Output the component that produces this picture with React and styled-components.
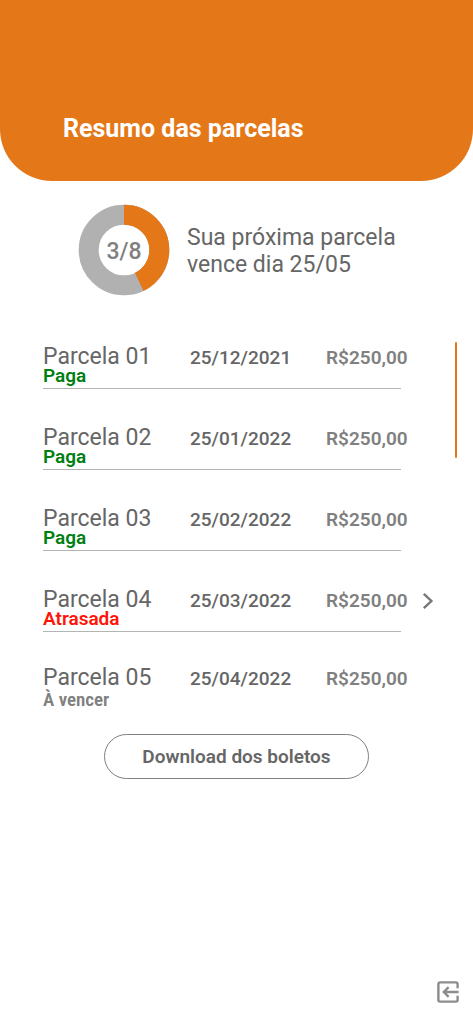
import React from 'react';
import styled, { createGlobalStyle } from 'styled-components';

const parcelas = [
    { numero: '01', data: '25/12/2021', valor: 'R$250,00', status: 'Paga' },
    { numero: '02', data: '25/01/2022', valor: 'R$250,00', status: 'Paga' },
    { numero: '03', data: '25/02/2022', valor: 'R$250,00', status: 'Paga' },
    { numero: '04', data: '25/03/2022', valor: 'R$250,00', status: 'Atrasada', detalhes: true },
    { numero: '05', data: '25/04/2022', valor: 'R$250,00', status: 'À vencer' },
];

const statusColors = {
    'Paga': '#007f12',
    'Atrasada': '#ff1408',
    'À vencer': '#808080',
};

export default function App() {
    return (
        <>
            <GlobalStyle />
            <Page>
                <PageHeader>
                    <h1>Resumo das parcelas</h1>
                </PageHeader>

                <Summary>
                    <Chart viewBox="0 0 92 92" role="img" aria-label="3 de 8 parcelas">
                        <circle cx="46" cy="46" r="35.3" fill="none" stroke="#b1b1b1" strokeWidth="20" />
                        <circle
                            cx="46"
                            cy="46"
                            r="35.3"
                            fill="none"
                            stroke="#e47818"
                            strokeWidth="20"
                            pathLength="100"
                            strokeDasharray="42.9 57.1"
                            transform="rotate(-90 46 46)"
                        />
                        <text x="46" y="55" textAnchor="middle">3/8</text>
                    </Chart>
                    <p>Sua próxima parcela<br />vence dia 25/05</p>
                </Summary>

                <Panel>
                    <List>
                        {parcelas.map((parcela) => (
                            <Row key={parcela.numero}>
                                <Info>
                                    <Name>Parcela {parcela.numero}</Name>
                                    <DueDate>{parcela.data}</DueDate>
                                    <Amount>{parcela.valor}</Amount>
                                    <Status $status={parcela.status}>{parcela.status}</Status>
                                </Info>
                                {parcela.detalhes && (
                                    <IconButton aria-label="Ver detalhes">
                                        <svg width="12" height="18" viewBox="0 0 12 18" fill="none" stroke="#777" strokeWidth="2.4">
                                            <path d="M1.8 1.8 9.4 9 1.8 16.2" />
                                        </svg>
                                    </IconButton>
                                )}
                            </Row>
                        ))}
                    </List>
                    <ScrollThumb />
                </Panel>

                <DownloadButton>Download dos boletos</DownloadButton>

                <PageFooter>
                    <IconButton aria-label="Sair">
                        <svg width="22" height="22" viewBox="0 0 22 22" fill="none" stroke="#8c8c8c" strokeWidth="2.4">
                            <path d="M20.6 7.2V3q0-1.6-1.6-1.6H3Q1.4 1.4 1.4 3v16q0 1.6 1.6 1.6h16q1.6 0 1.6-1.6v-4.2" />
                            <path d="M21.6 11H7.4M11.6 6.2 6.8 11l4.8 4.8" />
                        </svg>
                    </IconButton>
                </PageFooter>
            </Page>
        </>
    );
}

const GlobalStyle = createGlobalStyle`
    * {
        box-sizing: border-box;
        margin: 0;
        padding: 0;
    }

    body {
        background-color: #fff;
        color: #666;
        font-family: Roboto, 'Liberation Sans', sans-serif;
    }

    button {
        background: none;
        border: none;
        color: inherit;
        font-family: inherit;
        cursor: pointer;
    }
`

const Page = styled.main`
    display: flex;
    flex-direction: column;
    min-height: 100vh;
`

const PageHeader = styled.header`
    padding: 113px 63px 36px;
    background-color: #e47818;
    border-radius: 0 0 52px 52px;
    color: #fff;

    h1 {
        font-size: 25px;
        font-weight: 700;
        line-height: 32px;
    }
`

const Summary = styled.section`
    display: flex;
    align-items: center;
    gap: 17px;
    padding: 23px 24px 0 78px;

    p {
        padding-top: 2px;
        font-size: 23px;
        line-height: 27px;
    }
`

const Chart = styled.svg`
    flex: none;
    width: 92px;
    height: 92px;

    text {
        fill: #808080;
        font-size: 23px;
        font-weight: 500;
    }
`

const Panel = styled.section`
    display: flex;
    align-items: flex-start;
    padding: 46px 16px 0 43px;
`

const List = styled.ul`
    flex: 1;
    min-width: 0;
    padding-top: 1px;
    list-style: none;
`

const Row = styled.li`
    display: grid;
    grid-template-columns: minmax(0, 1fr) 54px;
    margin-bottom: 35px;

    &:nth-last-child(2) {
        margin-bottom: 32px;
    }

    &:last-child {
        margin-bottom: 0;
    }
`

const Info = styled.div`
    display: grid;
    grid-template-columns: 147px 136px minmax(0, 1fr);
    grid-template-rows: 26px 19px;
    border-bottom: 1px solid #b4b4b4;
    white-space: nowrap;

    ${Row}:last-child & {
        grid-template-rows: 29px 17px;
        border-bottom: none;
    }
`

const Name = styled.h2`
    font-size: 23px;
    font-weight: 400;
    line-height: 28px;
`

const DueDate = styled.span`
    padding-top: 4px;
    font-size: 19px;
    font-weight: 500;
    line-height: 22px;
`

const Amount = styled(DueDate)`
    color: #808080;
    font-weight: 600;
`

const Status = styled.span`
    color: ${({ $status }) => statusColors[$status]};
    font-family: ${({ $status }) => ($status === 'À vencer' ? "'Roboto Condensed', Roboto, sans-serif" : 'inherit')};
    font-size: 19px;
    font-weight: 600;
    line-height: 14px;
`

const IconButton = styled.button`
    display: flex;
    align-items: center;
    justify-content: center;
    height: 30px;
`

const ScrollThumb = styled.div`
    flex: none;
    width: 2px;
    height: 116px;
    border-radius: 2px;
    background-color: #e47818;
`

const DownloadButton = styled.button`
    align-self: center;
    margin-top: 24px;
    padding: 0 37px;
    border: 1px solid #808080;
    border-radius: 23px;
    font-size: 19px;
    font-weight: 600;
    line-height: 43px;
`

const PageFooter = styled.footer`
    display: flex;
    justify-content: flex-end;
    margin-top: auto;
    padding: 17px 14px;
`
